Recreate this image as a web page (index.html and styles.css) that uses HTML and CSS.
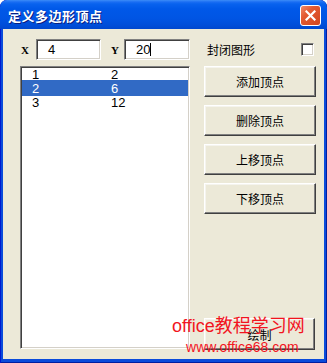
FILE: index.html
```html
<!DOCTYPE html>
<html lang="zh-CN">
<head>
    <meta charset="UTF-8">
    <title>定义多边形顶点</title>
    <link rel="stylesheet" href="styles.css">
</head>
<body>
    <div class="window">
        <header class="titlebar">
            <h1>定义多边形顶点</h1>
            <button class="close-btn" aria-label="关闭">
                <svg width="11" height="11" viewBox="0 0 11 11">
                    <path d="M1.5 1.5 L9.5 9.5 M9.5 1.5 L1.5 9.5" stroke="#fff" stroke-width="2.2" stroke-linecap="square"/>
                </svg>
            </button>
        </header>

        <div class="client">
            <section class="left">
                <div class="coords">
                    <label class="axis">X</label>
                    <div class="field">4</div>
                    <label class="axis axis-y">Y</label>
                    <div class="field">20<span class="caret"></span></div>
                </div>

                <div class="listbox">
                    <div class="row"><span class="col">1</span><span>2</span></div>
                    <div class="row selected"><span class="col">2</span><span>6</span></div>
                    <div class="row"><span class="col">3</span><span>12</span></div>
                </div>
            </section>

            <section class="right">
                <div class="closed">
                    <span>封闭图形</span>
                    <span class="checkbox"></span>
                </div>
                <button class="btn">添加顶点</button>
                <button class="btn">删除顶点</button>
                <button class="btn">上移顶点</button>
                <button class="btn">下移顶点</button>
                <button class="btn draw-btn">绘制</button>
            </section>
        </div>

        <div class="watermark">
            <span class="wm-big">office教程学习网</span>
            <span class="wm-small">www.office68.com</span>
        </div>
    </div>
</body>
</html>
```

FILE: styles.css
```css
:root {
    --face: #ECE9D8;
    --blue: #0A4BDB;
    --select: #316AC5;
    --shadow: #808080;
    --dark: #404040;
}

* {
    box-sizing: border-box;
    margin: 0;
    padding: 0;
}

body {
    background: #fff;
    font-family: "Noto Sans CJK SC", "Liberation Sans", sans-serif;
    font-size: 12px;
    color: #000;
}

.window {
    position: relative;
    width: 327px;
    height: 363px;
    background: var(--blue);
    border-radius: 7px 7px 0 0;
    box-shadow: inset 1px 0 0 #0019CF, inset -1px 0 0 #001EA0, inset 0 -1px 0 #001EA0;
    overflow: hidden;
}

.titlebar {
    height: 29px;
    display: flex;
    align-items: center;
    justify-content: space-between;
    padding: 0 6px 0 8px;
    background: linear-gradient(#3C8CF7 0, #1A6DF3 2px, #0862EE 4px, #0058E8 9px, #0055E4 18px, #004ED9 25px, #0047CE 29px);
    border-radius: 7px 7px 0 0;
}

.titlebar h1 {
    color: #fff;
    font-size: 13px;
    font-weight: 700;
    letter-spacing: 0.5px;
    text-shadow: 1px 1px 0 #0A1E80;
    line-height: 1;
    margin-top: 2px;
}

.close-btn {
    width: 21px;
    height: 21px;
    border: 1px solid #fff;
    border-radius: 3px;
    background: linear-gradient(135deg, #F08A6A 0%, #E35A32 35%, #D3451D 100%);
    display: flex;
    align-items: center;
    justify-content: center;
    margin-top: 2px;
}

.client {
    margin: 0 3px;
    height: 330px;
    background: var(--face);
    display: flex;
    gap: 14px;
    padding: 10px 0 0 17px;
}

.left {
    width: 170px;
    display: flex;
    flex-direction: column;
    gap: 6px;
}

.coords {
    display: grid;
    grid-template-columns: 16px 65px 23px 66px;
    height: 21px;
    align-items: center;
}

.axis {
    font-family: "Liberation Serif", serif;
    font-weight: 700;
    font-size: 11px;
    padding-left: 1px;
}

.axis-y {
    padding-left: 10px;
}

.field {
    height: 21px;
    background: #fff;
    border: 1px solid;
    border-color: var(--shadow) #fff #fff var(--shadow);
    box-shadow: inset 1px 1px 0 var(--dark), inset -1px -1px 0 #D4D0C8;
    font-family: "Liberation Sans", sans-serif;
    font-size: 13px;
    line-height: 19px;
    padding-left: 11px;
}

.caret {
    display: inline-block;
    width: 1px;
    height: 13px;
    background: #000;
    vertical-align: -2px;
}

.listbox {
    height: 283px;
    background: #fff;
    border: 1px solid;
    border-color: var(--shadow) #fff #fff var(--shadow);
    box-shadow: inset 1px 1px 0 var(--dark), inset -1px -1px 0 #D4D0C8;
    padding: 1px 1px 0 1px;
    overflow: hidden;
}

.row {
    height: 14px;
    line-height: 14px;
    display: flex;
    font-family: "Liberation Sans", sans-serif;
    font-size: 13px;
    padding-left: 10px;
}

.row.selected {
    height: 16px;
    margin-top: -2px;
    padding-top: 2px;
    background: var(--select);
    color: #fff;
}

.col {
    width: 79px;
}

.right {
    width: 112px;
    display: flex;
    flex-direction: column;
}

.closed {
    height: 21px;
    display: flex;
    align-items: center;
    justify-content: space-between;
    padding: 0 2px 0 3px;
    margin-bottom: 6px;
}

.checkbox {
    width: 13px;
    height: 13px;
    background: #fff;
    border: 1px solid;
    border-color: var(--shadow) #fff #fff var(--shadow);
    box-shadow: inset 1px 1px 0 var(--dark), inset -1px -1px 0 #D4D0C8;
}

.btn {
    height: 31px;
    margin-bottom: 8px;
    font-family: "Noto Sans CJK SC", sans-serif;
    font-size: 12px;
    color: #000;
    background: var(--face);
    border: 1px solid;
    border-color: #fff #404040 #404040 #fff;
    box-shadow: inset -1px -1px 0 #808080, inset 1px 1px 0 #F5F4EE;
}

.draw-btn {
    margin-top: auto;
    height: 32px;
    width: 111px;
    margin-bottom: 9px;
}

.watermark {
    position: absolute;
    left: 172px;
    top: 314px;
    display: flex;
    flex-direction: column;
    align-items: center;
    color: #F2141E;
    font-family: "Liberation Sans", "Noto Sans CJK SC", sans-serif;
    pointer-events: none;
}

.wm-big {
    font-size: 18px;
    line-height: 24px;
    white-space: nowrap;
}

.wm-small {
    font-size: 14px;
    line-height: 16px;
    white-space: nowrap;
    margin-top: 1px;
    padding-left: 8px;
}
```
